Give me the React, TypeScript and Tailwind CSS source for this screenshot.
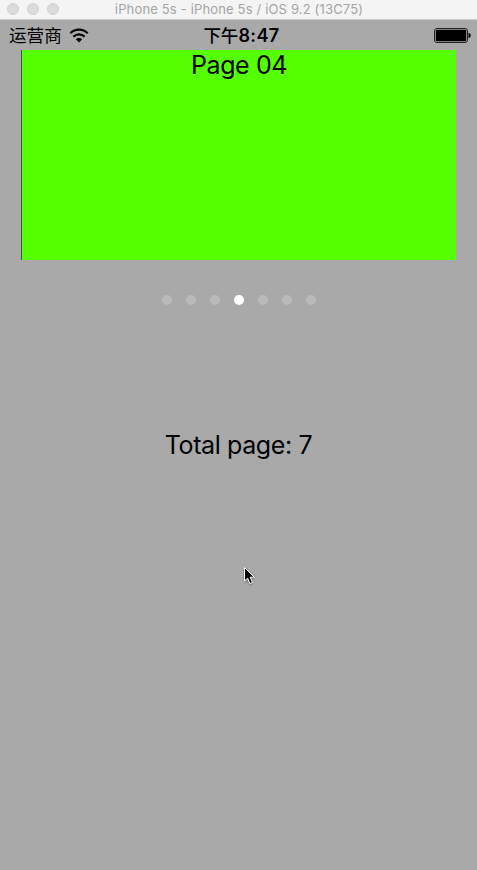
const PAGE_COUNT = 7;
const CURRENT = 3;

function TitleBar() {
  return (
    <header className="grid h-5 shrink-0 grid-cols-[57px_1fr_57px] items-start border-b border-[#cccccc] bg-[#f4f4f4]">
      <div className="flex gap-2 pt-[3px] pl-[7px]">
        {[0, 1, 2].map((i) => (
          <span key={i} className="size-3 shrink-0 rounded-full border border-[#d0d0d0] bg-[#dbdbdb]" />
        ))}
      </div>
      <h1 className="pl-px text-center text-[13px] leading-[19px] tracking-[0.16px] whitespace-nowrap text-[#a5a5a5]">
        iPhone 5s - iPhone 5s / iOS 9.2 (13C75)
      </h1>
    </header>
  );
}

function StatusBar() {
  return (
    <div className="grid h-[30px] shrink-0 grid-cols-3 items-center pr-[5px] pl-[9px] text-black">
      <div className="flex items-center gap-[7px]">
        <span className="pt-[2px] text-[17.6px] leading-[28px]">运营商</span>
        <svg className="h-[15px] w-[20px]" viewBox="0 0 20 15" fill="none" stroke="#000" strokeWidth="2.2">
          <path d="M1.3 5.2C6.2 .4 13.8 .4 18.7 5.2" />
          <path d="M4.4 8.6C7.6 5.6 12.4 5.6 15.6 8.6" />
          <path d="M10 14.4L6.8 11.3C8.5 9.7 11.5 9.7 13.2 11.3Z" fill="#000" stroke="none" />
        </svg>
      </div>
      <span className="pt-[2px] pl-[2px] text-center text-[18px] leading-[28px] font-semibold whitespace-nowrap">
        <span className="text-[17.5px] font-medium">下午</span>
        <span className="tracking-[0.4px]">8:47</span>
      </span>
      <svg className="h-[16px] w-[38px] justify-self-end" viewBox="0 0 38 16">
        <rect x="0.5" y="1.5" width="33" height="14" rx="2.5" fill="none" stroke="#222" />
        <rect x="1.8" y="2.8" width="30.4" height="11.4" rx="1.2" fill="#000" />
        <path d="M34.5 6C37.4 6.2 37.4 10.8 34.5 11Z" fill="#000" />
      </svg>
    </div>
  );
}

function Pointer() {
  return (
    <svg className="absolute top-[566px] left-[242px] h-[22px] w-[16px] drop-shadow-[0_1px_1px_rgba(0,0,0,0.35)]" viewBox="0 0 16 22">
      <path d="M2.5 1.5V15L5.6 12.2L7.9 17.6L10.5 16.5L8.2 11.2H12.2Z" fill="#000" stroke="#fff" strokeWidth="1" />
    </svg>
  );
}

export default function App() {
  return (
    <main className="relative flex h-[870px] w-[477px] flex-col overflow-hidden bg-[#a9a9a9] font-[Inter,'Noto_Sans_CJK_SC',sans-serif]">
      <TitleBar />
      <StatusBar />
      <section className="mr-[21px] ml-[21px] h-[210px] shrink-0 border-l border-[#4d4d4d] bg-[#55ff00] text-center text-[25px] leading-[31px] tracking-[-0.4px] text-black">
        Page 04
      </section>
      <div className="mt-[35px] flex h-[10px] justify-center gap-[14px]">
        {Array.from({ length: PAGE_COUNT }, (_, i) => (
          <span key={i} className={`size-[10px] rounded-full ${i === CURRENT ? "bg-white" : "bg-[#bababa]"}`} />
        ))}
      </div>
      <p className="mt-[125px] text-center text-[25px] leading-[31px] tracking-[-0.38px] text-black">Total page: 7</p>
      <Pointer />
    </main>
  );
}
